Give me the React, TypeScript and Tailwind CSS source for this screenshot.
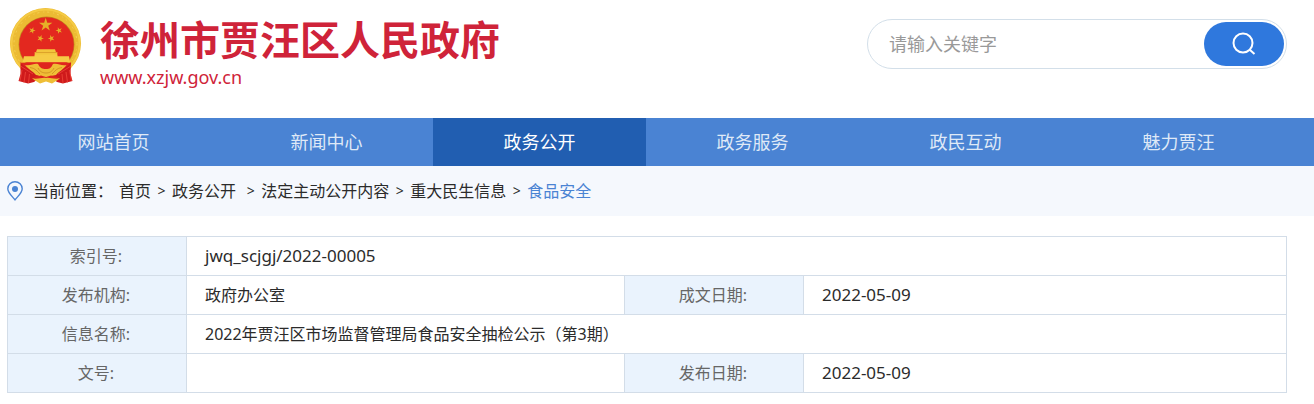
import { Fragment } from 'react';
import clsx from 'clsx';

const navItems = [
  { label: '网站首页' },
  { label: '新闻中心' },
  { label: '政务公开', active: true },
  { label: '政务服务' },
  { label: '政民互动' },
  { label: '魅力贾汪' },
];

const crumbs = ['首页', '政务公开 ', '法定主动公开内容', '重大民生信息', '食品安全'];

const STAR =
  'M0 -1L0.225 -0.309L0.951 -0.309L0.363 0.118L0.588 0.809L0 0.382L-0.588 0.809L-0.363 0.118L-0.951 -0.309L-0.225 -0.309Z';

const Emblem = () => (
  <svg viewBox="10 8 72 77" className="h-[77px] w-[72px] shrink-0" aria-hidden="true">
    <circle cx="45.5" cy="43.5" r="35.5" fill="#ecbb33" />
    <circle cx="45.5" cy="43.5" r="34" fill="none" stroke="#f5cb45" strokeWidth="2" />
    <circle cx="45.5" cy="43.5" r="31.5" fill="none" stroke="#f6d257" strokeWidth="1" strokeDasharray="2 4 1 3" />
    <circle cx="46.5" cy="44.5" r="28" fill="#c08a1f" />
    <circle cx="46.5" cy="44.5" r="27.3" fill="#e3281f" />
    <g fill="#e6ae28">
      <path d={STAR} transform="translate(45.7 24.8) scale(7)" />
      <path d={STAR} transform="translate(32.2 30.5) rotate(20) scale(3.5)" />
      <path d={STAR} transform="translate(59 30.5) rotate(-20) scale(3.5)" />
      <path d={STAR} transform="translate(40.4 38.4) rotate(20) scale(3.5)" />
      <path d={STAR} transform="translate(51.3 38.4) rotate(-20) scale(3.5)" />
    </g>
    <path d="M37 49.3H55L56 52.3H57.5L57 55.5H35L34.5 52.3H36Z" fill="#f3c53c" />
    <path d="M36 52.5H56.5" stroke="#d29322" strokeWidth="0.7" />
    <path d="M24 56.3H34.5V54.5H57.5V56.3H69L70 62.3H22.5Z" fill="#f6cb45" />
    <path d="M21 62.8H71L67 72L46 75L25 72Z" fill="#df261e" />
    <path d="M20.5 62C24 67 29 70 35 71L40 77L34 82L28 83.5L18.5 81L20.5 74Z" fill="#cf1a1b" />
    <path d="M71 62C67 67 62 70 56 71L51 77L57 82L63 83.5L72.5 81L70.5 74Z" fill="#cf1a1b" />
    <path
      d="M20.5 66L33 74M22 70L20 81M25.5 72L24 82.5M29.5 74L28.5 83M71 66L58 74M69.5 70L71.5 81M66 72L67.5 82.5M62 74L63 83"
      stroke="#f0463a"
      strokeWidth="0.8"
      fill="none"
    />
    <path
      d="M25 65C31 66 34 63 38 64C40 68 42 69 46 69C50 69 51 68 53 64C58 63 61 66 66.5 65C63 70 59 71 56 75L46 77L36 75C33 71 29 70 25 65Z"
      fill="#efbe36"
    />
    <path
      d="M38 68C40 72 43 73 46 73C49 73 52 72 54 68M30 67.5C35 68 37 71 40 74M62 67.5C57 68 55 71 52 74"
      stroke="#cb8b20"
      strokeWidth="0.8"
      fill="none"
    />
    <path d="M34 77L41 75.5L46 77L51 75.5L58 77L55 80L46 78.5L37 80Z" fill="#dc231d" />
    <path d="M32 78C37 80 42 77 46 78C50 77 55 80 60 78C57 81 54 82 52 83.5L46 81.5L40 83.5C38 82 35 81 32 78Z" fill="#efbe36" />
  </svg>
);

const Header = () => (
  <header className="flex h-[118px] items-start justify-between pr-[27px] pl-[10px]">
    <div className="flex pt-2">
      <Emblem />
      <div className="ml-[18px] text-[#cf2339]">
        <h1 className="pt-2 text-[40px] leading-[48px] font-bold">徐州市贾汪区人民政府</h1>
        <p className="text-[18px] leading-[26px]">www.xzjw.gov.cn</p>
      </div>
    </div>
    <form
      className="mt-[19px] flex h-[50px] w-[420px] items-center rounded-full border border-[#d3dfe9] pr-[2px]"
      onSubmit={(e) => e.preventDefault()}
    >
      <input
        type="text"
        aria-label="请输入关键字"
        placeholder="请输入关键字"
        className="h-full min-w-0 flex-1 bg-transparent pl-[21px] text-[18px] outline-none placeholder:text-[#999999]"
      />
      <button
        type="submit"
        aria-label="搜索"
        className="flex h-11 w-20 items-center justify-center rounded-full bg-[#2f78dd] text-white"
      >
        <svg viewBox="0 0 24 24" className="size-6" fill="none" stroke="currentColor" strokeWidth="2">
          <circle cx="11" cy="11" r="9.5" />
          <path d="M17.7 17.7L22.5 22" />
        </svg>
      </button>
    </form>
  </header>
);

const Nav = () => (
  <nav className="bg-[#4a83d3] pr-[29px] pl-[7px]">
    <ul className="grid grid-cols-6">
      {navItems.map((item) => (
        <li key={item.label}>
          <a
            href="#"
            className={clsx(
              'block h-12 text-center text-[18px] leading-[48px]',
              item.active ? 'bg-[#215eb1] text-white' : 'text-[#dfe9f7]'
            )}
          >
            {item.label}
          </a>
        </li>
      ))}
    </ul>
  </nav>
);

const Breadcrumb = () => (
  <div className="flex h-[50px] items-center bg-[#f5f8fd] pl-[7px] text-base text-[#2b2b2b]">
    <svg viewBox="0 0 16 20" className="h-5 w-4" fill="none" stroke="#4a83d3" strokeWidth="1.4">
      <path d="M8 18.8C5 15 0.8 12 0.8 7.8A7.2 7 0 0 1 15.2 7.8C15.2 12 11 15 8 18.8Z" />
      <circle cx="8" cy="8" r="3" fill="#4a83d3" stroke="none" />
    </svg>
    <span className="ml-[10px] w-[86px]">当前位置：</span>
    {crumbs.map((crumb, i) => (
      <Fragment key={crumb}>
        {i > 0 && <span className="w-[21px] text-center text-sm">&gt;</span>}
        <a href="#" className={clsx('whitespace-pre', i === crumbs.length - 1 && 'text-[#4a83d3]')}>
          {crumb}
        </a>
      </Fragment>
    ))}
  </div>
);

const label = 'border border-[#d3dde8] bg-[#eaf3fd] pr-[2px] text-center font-normal text-[#666666]';
const value = 'border border-[#d3dde8] pl-[18px] text-[#2b2b2b]';

const InfoTable = () => (
  <div className="mt-5 pr-[27px] pl-[7px]">
    <table className="w-full table-fixed border-collapse text-base">
      <colgroup>
        <col className="w-[179px]" />
        <col className="w-[438px]" />
        <col className="w-[179px]" />
        <col />
      </colgroup>
      <tbody>
        <tr className="h-[39px]">
          <th scope="row" className={label}>索引号:</th>
          <td colSpan={3} className={clsx(value, 'text-[17px]')}>jwq_scjgj/2022-00005</td>
        </tr>
        <tr className="h-[39px]">
          <th scope="row" className={label}>发布机构:</th>
          <td className={value}>政府办公室</td>
          <th scope="row" className={label}>成文日期:</th>
          <td className={clsx(value, 'text-[17px]')}>2022-05-09</td>
        </tr>
        <tr className="h-[39px]">
          <th scope="row" className={label}>信息名称:</th>
          <td colSpan={3} className={value}>2022年贾汪区市场监督管理局食品安全抽检公示（第3期）</td>
        </tr>
        <tr className="h-[39px]">
          <th scope="row" className={label}>文号:</th>
          <td className={value}></td>
          <th scope="row" className={label}>发布日期:</th>
          <td className={clsx(value, 'text-[17px]')}>2022-05-09</td>
        </tr>
      </tbody>
    </table>
  </div>
);

const App = () => {
  return (
    <div
      lang="zh-CN"
      className="min-h-screen bg-white font-['Noto_Sans','Noto_Sans_CJK_SC',sans-serif]"
    >
      <Header />
      <Nav />
      <Breadcrumb />
      <InfoTable />
    </div>
  );
};

export default App;
